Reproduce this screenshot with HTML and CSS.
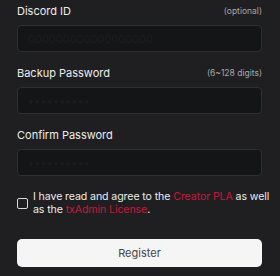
FILE: index.html
```html
<!DOCTYPE html>
<html lang="en">
<head>
  <meta charset="UTF-8">
  <meta name="viewport" content="width=device-width, initial-scale=1.0">
  <title>Register</title>
  <link rel="stylesheet" href="styles.css">
</head>
<body>
  <form class="register-form">
    <div class="field">
      <div class="field-head">
        <label for="discord">Discord ID</label>
        <span class="hint">(optional)</span>
      </div>
      <input type="text" id="discord" placeholder="000000000000000000">
    </div>
    <div class="field">
      <div class="field-head">
        <label for="password">Backup Password</label>
        <span class="hint">(6~128 digits)</span>
      </div>
      <input type="password" id="password" placeholder="••••••••••">
    </div>
    <div class="field">
      <div class="field-head">
        <label for="confirm">Confirm Password</label>
      </div>
      <input type="password" id="confirm" placeholder="••••••••••">
    </div>

    <div class="terms">
      <input type="checkbox" id="agree">
      <label for="agree">I have read and agree to the <a href="#">Creator PLA</a> as well as the <a href="#">txAdmin License</a>.</label>
    </div>

    <button type="submit">Register</button>
  </form>
</body>
</html>
```

FILE: styles.css
```css
body {
  margin: 0;
  padding: 0;
  background: #1f1f21;
  color: #ececec;
  font-family: 'Inter', 'Liberation Sans', sans-serif;
}

.register-form {
  padding: 3px 18px 0 17px;
}

.field {
  margin-bottom: 13px;
}

.field-head {
  display: flex;
  justify-content: space-between;
  align-items: center;
  height: 16px;
  margin-bottom: 6px;
}

.field-head label {
  font-size: 11px;
  color: #ededed;
}

.hint {
  font-size: 8.5px;
  color: #a8a8a8;
}

.field input {
  display: block;
  width: 100%;
  box-sizing: border-box;
  height: 27px;
  padding: 0 10px;
  background: #141516;
  border: 1px solid #2e2f32;
  border-radius: 4px;
  color: #eee;
  font-family: inherit;
  font-size: 11px;
  outline: none;
}

.field input::placeholder {
  color: #1b1c1e;
}

.terms {
  display: flex;
  align-items: center;
  margin-top: 14px;
  margin-right: -8px;
}

.terms input {
  appearance: none;
  flex: none;
  width: 11px;
  height: 11px;
  margin: 0 5px 0 0;
  border: 1px solid #d8d8d8;
  border-radius: 2px;
  background: transparent;
}

.terms label {
  font-size: 10.6px;
  line-height: 13px;
  letter-spacing: -0.1px;
  color: #ececec;
}

.terms a {
  color: #c8183c;
  text-decoration: none;
}

button {
  display: block;
  width: 100%;
  height: 28px;
  margin-top: 23px;
  border: none;
  border-radius: 5px;
  background: #f5f5f5;
  color: #444;
  font-family: inherit;
  font-size: 11px;
  cursor: pointer;
}
```
